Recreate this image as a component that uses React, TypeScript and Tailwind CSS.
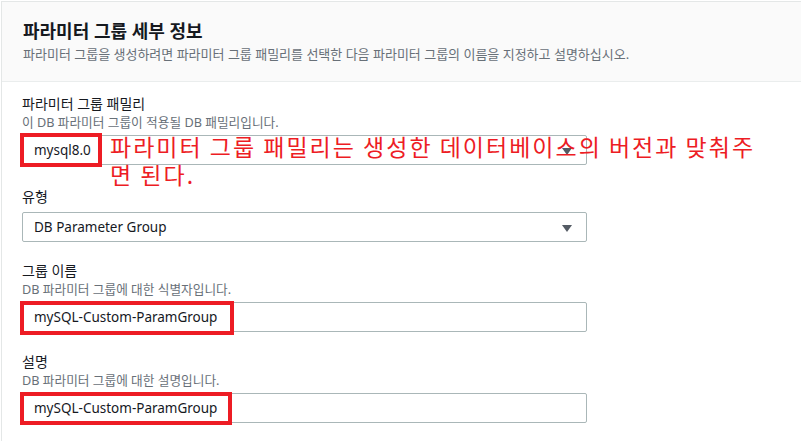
import React from "react";

const font = { fontFamily: '"Noto Sans", "Noto Sans CJK KR", sans-serif' };

function Arrow() {
  return (
    <svg width="10" height="7" viewBox="0 0 10 7" className="absolute right-[14px] top-[12px]">
      <path d="M0 0 H10 L5 7 Z" fill="#545b64" />
    </svg>
  );
}

function Field({
  label,
  desc,
  value,
  select,
  mark,
  className = "",
}: {
  label: string;
  desc?: string;
  value: string;
  select?: boolean;
  mark?: string;
  className?: string;
}) {
  return (
    <div className={"flex flex-col " + className}>
      <div className="text-[14px] leading-[20px] text-[#16191f]">{label}</div>
      {desc && <div className="text-[12.7px] leading-[16px] text-[#687078]">{desc}</div>}
      <div className="relative mt-[5px] h-[30px] w-[565px] rounded-[2px] border border-[#aab7b8] bg-white">
        <div className="pl-[11px] text-[13.5px] leading-[28px] text-[#16191f]">{value}</div>
        {select && <Arrow />}
        {mark && <div className={"absolute border-[4px] border-[#ed1c24] " + mark} />}
      </div>
    </div>
  );
}

export default function App() {
  return (
    <div className="h-[441px] w-[801px] overflow-hidden bg-white" style={font}>
      <div className="relative ml-px mt-px h-full border-l border-t border-[#e4e7e7]">
        <div className="h-[80px] border-b border-[#eaeded] bg-[#fafafa] pl-[21px] pt-[17px]">
          <h1 className="text-[18px] font-bold leading-[24px] text-[#16191f]">파라미터 그룹 세부 정보</h1>
          <p className="mt-[3px] text-[13px] leading-[16px] text-[#687078]">
            파라미터 그룹을 생성하려면 파라미터 그룹 패밀리를 선택한 다음 파라미터 그룹의 이름을 지정하고 설명하십시오.
          </p>
        </div>
        <div className="flex flex-col gap-[20px] pl-[20px] pt-[12px]">
          <Field
            label="파라미터 그룹 패밀리"
            desc="이 DB 파라미터 그룹이 적용될 DB 패밀리입니다."
            value="mysql8.0"
            select
            mark="left-[-3px] top-[-3px] h-[34px] w-[82px]"
          />
          <Field label="유형" value="DB Parameter Group" select className="mt-[2px]" />
          <Field
            label="그룹 이름"
            desc="DB 파라미터 그룹에 대한 식별자입니다."
            value="mySQL-Custom-ParamGroup"
            mark="left-[-3px] top-[-2px] h-[34px] w-[214px]"
            className="-mt-px"
          />
          <Field
            label="설명"
            desc="DB 파라미터 그룹에 대한 설명입니다."
            value="mySQL-Custom-ParamGroup"
            mark="left-[-3px] top-[-2px] h-[33px] w-[212px]"
          />
        </div>
        <div
          className="absolute left-[108px] top-[130px] text-[23px] leading-[28px] tracking-[2px] text-[#ed1c24]"
          style={{ fontFamily: '"Noto Sans CJK KR", sans-serif' }}
        >
          파라미터 그룹 패밀리는 생성한 데이터베이스의 버전과 맞춰주
          <br />면 된다.
        </div>
      </div>
    </div>
  );
}
